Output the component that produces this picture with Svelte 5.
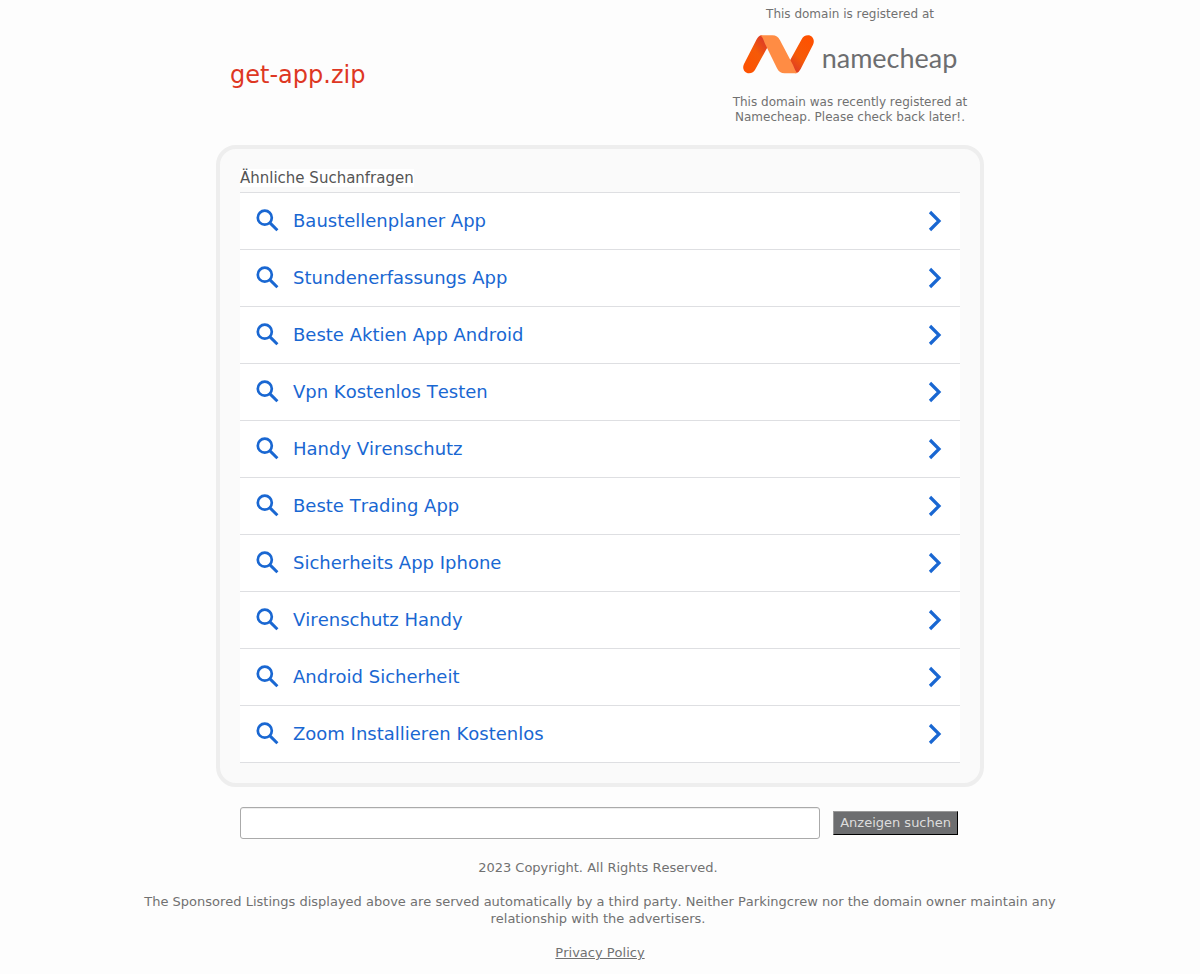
<script>
  const searches = [
    'Baustellenplaner App',
    'Stundenerfassungs App',
    'Beste Aktien App Android',
    'Vpn Kostenlos Testen',
    'Handy Virenschutz',
    'Beste Trading App',
    'Sicherheits App Iphone',
    'Virenschutz Handy',
    'Android Sicherheit',
    'Zoom Installieren Kostenlos'
  ];
  let query = $state('');
</script>

<div class="page">
  <header>
    <h1>get-app.zip</h1>
    <div class="registrar">
      <p>This domain is registered at</p>
      <a class="brand" href="#namecheap">
        <svg width="71" height="39" viewBox="0 0 213 117" aria-hidden="true">
          <defs>
            <linearGradient id="left" x1="0" y1="1" x2="0.8" y2="0">
              <stop offset="0" stop-color="#ff5000" />
              <stop offset="0.6" stop-color="#f55a08" />
              <stop offset="1" stop-color="#d9372a" />
            </linearGradient>
            <linearGradient id="right" x1="0.8" y1="0" x2="0.2" y2="1">
              <stop offset="0" stop-color="#ff5000" />
              <stop offset="0.6" stop-color="#f55a08" />
              <stop offset="1" stop-color="#d9372a" />
            </linearGradient>
          </defs>
          <path fill="url(#left)" d="M55 1 C48 2 44 8 41 13 L3 87 C-4 101 5 115 18 115 C27 115 33 111 37 103 L75 34 C70 18 65 5 55 1Z" />
          <path fill="url(#right)" d="M158 115 C165 114 169 109 173 102 L210 29 C217 15 208 1 195 1 C186 1 180 5 176 13 L138 82 C143 98 148 111 158 115Z" />
          <path fill="#ff8c44" d="M50 1 H88 C99 1 106 6 111 16 L150 90 C155 101 158 111 163 114 Q160 115 156 115 H125 C114 115 107 110 102 100 L66 26 C61 14 58 3 50 1Z" />
        </svg>
        <span>namecheap</span>
      </a>
      <p>This domain was recently registered at Namecheap. Please check back later!.</p>
    </div>
  </header>

  <main>
    <h2><span>Ähnliche Suchanfragen</span></h2>
    <ul>
      {#each searches as term}
        <li>
          <a href="#search">
            <svg class="lens" width="24" height="24" viewBox="0 0 24 24" aria-hidden="true">
              <circle cx="8.8" cy="8.7" r="7" fill="none" stroke="currentColor" stroke-width="2.7" />
              <path d="M13.7 13.6 L21.4 21.3" fill="none" stroke="currentColor" stroke-width="3" />
            </svg>
            <span>{term}</span>
            <svg class="chevron" width="14" height="22" viewBox="0 0 14 22" aria-hidden="true">
              <path d="M2 2 L11 11 L2 20" fill="none" stroke="currentColor" stroke-width="3.2" />
            </svg>
          </a>
        </li>
      {/each}
    </ul>
  </main>

  <form onsubmit={(event) => event.preventDefault()}>
    <input type="text" aria-label="Anzeigen suchen" bind:value={query} />
    <button type="submit">Anzeigen suchen</button>
  </form>
</div>

<footer>
  <p>2023 Copyright. All Rights Reserved.&nbsp;</p>
  <p>The Sponsored Listings displayed above are served automatically by a third party. Neither Parkingcrew nor the domain owner maintain any relationship with the advertisers.&nbsp;</p>
  <p><a href="#privacy">Privacy Policy</a></p>
</footer>

<style>
  :global(body) {
    background: #fdfdfd;
    color: #717171;
    font-family: "DejaVu Sans", Verdana, sans-serif;
    font-kerning: none;
  }
  .page {
    box-sizing: border-box;
    max-width: 768px;
    margin: 0 auto;
  }
  header {
    display: flex;
    justify-content: space-between;
    align-items: center;
    padding: 7px 14px 20px;
  }
  h1 {
    margin: 0;
    padding-top: 18px;
    color: #de3723;
    font-size: 24px;
    line-height: 30px;
    font-weight: 400;
  }
  .registrar {
    width: 240px;
    text-align: center;
    font-size: 12px;
    line-height: 15px;
  }
  .registrar p {
    margin: 0;
  }
  .brand {
    display: flex;
    align-items: center;
    justify-content: center;
    gap: 8px;
    height: 40px;
    margin: 12px 0 21px;
    color: #6d6e70;
    font-family: Lato, "Open Sans", sans-serif;
    font-size: 27px;
    font-weight: 400;
    line-height: 40px;
    text-decoration: none;
  }
  .brand svg {
    flex: none;
  }
  .brand span {
    padding-top: 8px;
  }
  main {
    padding: 20px;
    border: 4px solid #eee;
    border-radius: 20px;
    background: #fafafa;
  }
  h2 {
    margin: 0;
    padding-bottom: 5px;
    color: #555;
    font-size: 15px;
    line-height: 18px;
    font-weight: 400;
  }
  h2 span {
    background: #fff;
  }
  ul {
    margin: 0;
    padding: 0;
    border-top: 1px solid #dedfe2;
    background: #fff;
    list-style: none;
  }
  li {
    border-bottom: 1px solid #dedfe2;
  }
  li a {
    display: flex;
    align-items: center;
    height: 56px;
    padding: 0 18px 0 16px;
    color: #1967d2;
    font-size: 18px;
    line-height: 22px;
    text-decoration: none;
  }
  li span {
    flex: 1;
    margin-left: 13px;
  }
  form {
    display: flex;
    align-items: center;
    gap: 13px;
    padding: 20px 26px 20px 24px;
  }
  input {
    box-sizing: border-box;
    flex: 1;
    min-width: 0;
    height: 32px;
    padding: 0 8px;
    border: 1px solid #aaa;
    border-radius: 3px;
    background: #fff;
    box-shadow: inset 0 1px 0 #eee;
    font: inherit;
  }
  button {
    height: 24px;
    padding: 0 6px;
    border: 1px solid;
    border-color: #999 #000 #000 #999;
    background: #6d6e70;
    color: #ddd;
    font-family: inherit;
    font-size: 13px;
    line-height: 20px;
  }
  footer {
    max-width: 960px;
    margin: 0 auto;
    font-size: 13px;
    line-height: 17px;
    text-align: center;
  }
  footer p {
    margin: 0 0 17px;
  }
  footer p:last-child {
    margin-bottom: 0;
  }
  footer a {
    color: inherit;
  }
</style>
